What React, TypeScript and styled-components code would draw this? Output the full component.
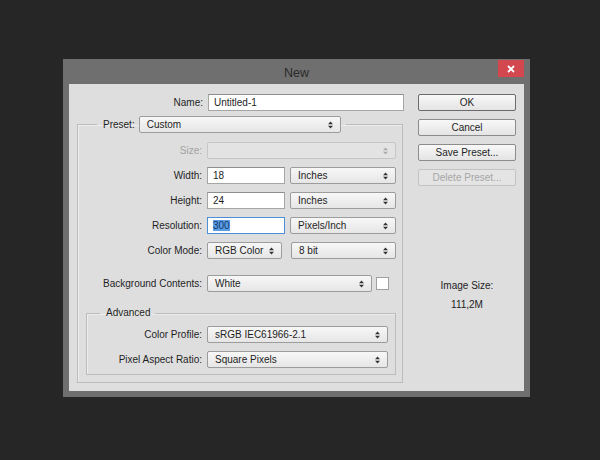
import React from 'react';
import styled, { createGlobalStyle, css } from 'styled-components';

const GlobalStyle = createGlobalStyle`
  html, body {
    margin: 0;
    padding: 0;
    background: #262626;
  }
  body {
    font-family: 'Liberation Sans', Arial, sans-serif;
    font-size: 10px;
    color: #1e1e1e;
  }
  * {
    box-sizing: border-box;
  }
`;

const Page = styled.div`
  width: 600px;
  height: 460px;
  padding: 59px 0 0 63px;
`;

const Frame = styled.div`
  width: 467px;
  height: 338px;
  background: #6f6f6f;
  padding: 0 6px 6px 6px;
  display: flex;
  flex-direction: column;
`;

const TitleBar = styled.div`
  height: 25px;
  display: grid;
  grid-template-columns: 1fr auto 1fr;
  align-items: start;
`;

const Title = styled.div`
  grid-column: 2;
  font-size: 12.5px;
  color: #2a2a2a;
  line-height: 25px;
  padding-top: 2px;
`;

const CloseButton = styled.div`
  grid-column: 3;
  justify-self: end;
  margin-top: 1px;
  width: 26px;
  height: 17px;
  background: #d3474f;
  display: flex;
  align-items: center;
  justify-content: center;
`;

const Content = styled.div`
  flex: 1;
  background: #dedede;
  display: flex;
  padding: 10px 8px 0 0;
`;

const MainColumn = styled.div`
  width: 335px;
  display: flex;
  flex-direction: column;
`;

const SideColumn = styled.div`
  width: 98px;
  margin-left: 14px;
  display: flex;
  flex-direction: column;
  gap: 8px;
`;

const Row = styled.div<{ $mt?: number }>`
  display: flex;
  align-items: center;
  gap: 5px;
  height: 17px;
  margin-top: ${(p) => p.$mt ?? 0}px;
`;

const Label = styled.span<{ $w?: number; $disabled?: boolean }>`
  ${(p) =>
    p.$w !== undefined &&
    css`
      width: ${p.$w}px;
      text-align: right;
    `}
  flex-shrink: 0;
  white-space: nowrap;
  color: ${(p) => (p.$disabled ? '#a2a2a2' : '#1e1e1e')};
`;

const Group = styled.fieldset<{ $ml: number; $w: number; $mt: number; $pt: number; $pb: number }>`
  margin: ${(p) => p.$mt}px 0 0 ${(p) => p.$ml}px;
  width: ${(p) => p.$w}px;
  min-width: 0;
  padding: ${(p) => p.$pt}px 0 ${(p) => p.$pb}px 0;
  border: 1px solid #bcbcbc;
  box-shadow: inset 1px 1px 0 #ececec;
  display: flex;
  flex-direction: column;
`;

const Legend = styled.legend<{ $ml: number }>`
  margin-left: ${(p) => p.$ml}px;
  padding: 0 5px 0 6px;
  display: flex;
  align-items: center;
  gap: 4px;
  line-height: 14px;
`;

const Field = styled.div<{ $w: number; $focus?: boolean }>`
  width: ${(p) => p.$w}px;
  height: 17px;
  background: #ffffff;
  border: 1px solid ${(p) => (p.$focus ? '#4d8fd6' : '#a6a6a6')};
  border-top-color: ${(p) => (p.$focus ? '#4d8fd6' : '#8e8e8e')};
  padding: 0 5px;
  display: flex;
  align-items: center;
  color: #1e1e1e;
  white-space: nowrap;
`;

const Selected = styled.span`
  background: #5b9de4;
  color: #123a68;
`;

const SelectBox = styled.div<{ $w: number; $disabled?: boolean; $ml?: number }>`
  width: ${(p) => p.$w}px;
  height: 17px;
  margin-left: ${(p) => p.$ml ?? 0}px;
  border: 1px solid ${(p) => (p.$disabled ? '#c6c6c6' : '#9c9c9c')};
  border-radius: 2px;
  background: ${(p) =>
    p.$disabled ? '#e3e3e3' : 'linear-gradient(#f7f7f7, #e6e6e6)'};
  display: flex;
  align-items: center;
  justify-content: space-between;
  padding: 0 7px 0 7px;
  color: #1e1e1e;
  white-space: nowrap;
`;

const Swatch = styled.div`
  width: 13px;
  height: 13px;
  margin-left: -1px;
  background: #ffffff;
  border: 1px solid #a0a0a0;
`;

const Button = styled.div<{ $default?: boolean; $disabled?: boolean }>`
  height: 17px;
  border: 1px solid ${(p) => (p.$default ? '#6b6b6b' : p.$disabled ? '#c2c2c2' : '#8c8c8c')};
  border-radius: 2px;
  background: ${(p) => (p.$disabled ? '#e4e4e4' : 'linear-gradient(#f8f8f8, #e4e4e4)')};
  color: ${(p) => (p.$disabled ? '#a6a6a6' : '#1e1e1e')};
  display: flex;
  align-items: center;
  justify-content: center;
  white-space: nowrap;
`;

const Info = styled.div<{ $mt: number }>`
  margin-top: ${(p) => p.$mt}px;
  text-align: center;
  line-height: 14px;
  color: #222;
`;

const Arrows = ({ disabled }: { disabled?: boolean }) => (
  <svg width="5" height="8" viewBox="0 0 5 8">
    <path d="M0 3.2 L2.5 0.4 L5 3.2 Z M0 4.8 L2.5 7.6 L5 4.8 Z" fill={disabled ? '#aaaaaa' : '#333333'} />
  </svg>
);

const Select = ({ w, value, disabled, ml }: { w: number; value?: string; disabled?: boolean; ml?: number }) => (
  <SelectBox $w={w} $disabled={disabled} $ml={ml}>
    <span>{value}</span>
    <Arrows disabled={disabled} />
  </SelectBox>
);

export default function App() {
  return (
    <Page>
      <GlobalStyle />
      <Frame>
        <TitleBar>
          <Title>New</Title>
          <CloseButton>
            <svg width="8" height="8" viewBox="0 0 8 8">
              <path d="M1 1 L7 7 M7 1 L1 7" stroke="#ffffff" strokeWidth="1.8" />
            </svg>
          </CloseButton>
        </TitleBar>
        <Content>
          <MainColumn>
            <Row>
              <Label $w={134}>Name:</Label>
              <Field $w={196}>Untitled-1</Field>
            </Row>

            <Group $ml={8} $w={326} $mt={5} $pt={9} $pb={7}>
              <Legend $ml={19}>
                <Label>Preset:</Label>
                <Select w={202} value="Custom" />
              </Legend>

              <Row>
                <Label $w={124} $disabled>Size:</Label>
                <Select w={189} disabled />
              </Row>
              <Row $mt={8}>
                <Label $w={124}>Width:</Label>
                <Field $w={78}>18</Field>
                <Select w={106} value="Inches" />
              </Row>
              <Row $mt={8}>
                <Label $w={124}>Height:</Label>
                <Field $w={78}>24</Field>
                <Select w={106} value="Inches" />
              </Row>
              <Row $mt={8}>
                <Label $w={124}>Resolution:</Label>
                <Field $w={78} $focus>
                  <Selected>300</Selected>
                </Field>
                <Select w={106} value="Pixels/Inch" />
              </Row>
              <Row $mt={8}>
                <Label $w={124}>Color Mode:</Label>
                <Select w={75} value="RGB Color" />
                <Select w={105} value="8 bit" ml={4} />
              </Row>
              <Row $mt={16}>
                <Label $w={124}>Background Contents:</Label>
                <Select w={165} value="White" />
                <Swatch />
              </Row>

              <Group $ml={8} $w={310} $mt={14} $pt={6} $pb={6}>
                <Legend $ml={13}>
                  <Label>Advanced</Label>
                </Legend>
                <Row>
                  <Label $w={115}>Color Profile:</Label>
                  <Select w={181} value="sRGB IEC61966-2.1" />
                </Row>
                <Row $mt={8}>
                  <Label $w={115}>Pixel Aspect Ratio:</Label>
                  <Select w={181} value="Square Pixels" />
                </Row>
              </Group>
            </Group>
          </MainColumn>

          <SideColumn>
            <Button $default>OK</Button>
            <Button>Cancel</Button>
            <Button>Save Preset...</Button>
            <Button $disabled>Delete Preset...</Button>
            <Info $mt={85}>Image Size:</Info>
            <Info $mt={-3}>111,2M</Info>
          </SideColumn>
        </Content>
      </Frame>
    </Page>
  );
}
